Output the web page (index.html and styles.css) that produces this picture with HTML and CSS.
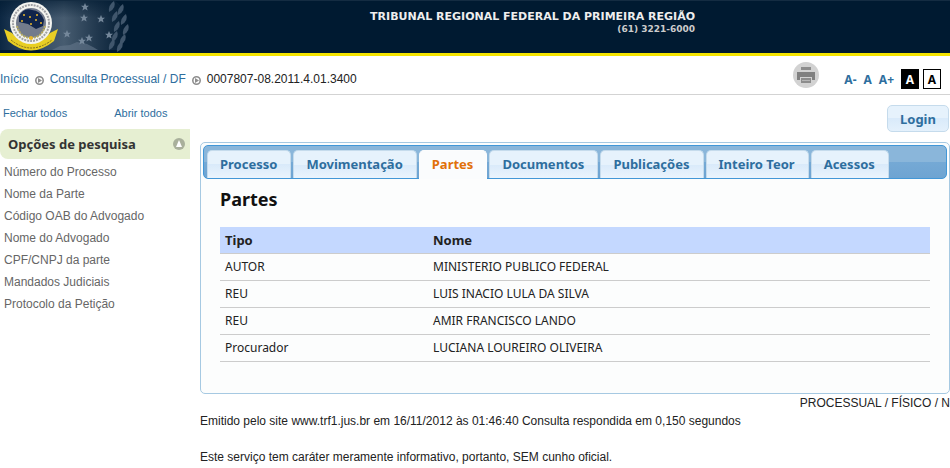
FILE: index.html
```html
<!DOCTYPE html>
<html lang="pt-BR">
<head>
    <meta charset="UTF-8">
    <meta name="viewport" content="width=device-width, initial-scale=1.0">
    <title>Consulta Processual - Partes</title>
    <link rel="stylesheet" href="styles.css">
</head>
<body>
    <header class="topo">
        <svg class="brasao" viewBox="0 1 140 52" width="140" height="52" role="img" aria-label="Tribunal Regional Federal">
            <defs>
                <linearGradient id="fundo">
                    <stop offset="0" stop-color="#0c2742"/>
                    <stop offset="0.2" stop-color="#2c4560"/>
                    <stop offset="0.5" stop-color="#475c70"/>
                    <stop offset="0.75" stop-color="#22394f"/>
                    <stop offset="1" stop-color="#001a31"/>
                </linearGradient>
                <linearGradient id="sombra" x2="0" y2="1">
                    <stop offset="0" stop-color="#001a31" stop-opacity="0.6"/>
                    <stop offset="1" stop-color="#001a31" stop-opacity="0"/>
                </linearGradient>
                <path id="estrela" d="M0-4L1.2-1.3L4-1.2L1.8.6L2.6 3.5L0 1.9L-2.6 3.5L-1.8.6L-4-1.2L-1.2-1.3Z"/>
                <path id="folha" d="M0 5Q-1-2 5-6Q8 1 0 5Z"/>
            </defs>
            <path d="M0 1H115Q130 12 128 28Q126 41 119 50H0Z" fill="url(#fundo)"/>
            <path d="M0 1H115Q122 8 126 18H0Z" fill="url(#sombra)"/>
            <path d="M52 50L60 46L70 45L77 42L87 44L93 47L98 50Z" fill="#64778a" opacity="0.6"/>
            <g fill="#40566c">
                <use href="#folha" x="109" y="7"/><use href="#folha" x="118" y="10"/>
                <use href="#folha" x="112" y="17"/><use href="#folha" x="121" y="20"/>
                <use href="#folha" x="114" y="27"/><use href="#folha" x="123" y="30"/>
                <use href="#folha" x="112" y="37"/><use href="#folha" x="120" y="40"/>
                <use href="#folha" x="109" y="45"/><use href="#folha" x="117" y="47"/>
            </g>
            <g fill="#74879a">
                <use href="#estrela" x="85" y="7"/>
                <use href="#estrela" x="84" y="18"/>
                <use href="#estrela" x="101" y="19"/>
                <use href="#estrela" x="67" y="34"/>
                <use href="#estrela" x="82" y="41"/>
                <use href="#estrela" x="89" y="38"/>
                <use href="#estrela" x="109" y="35"/>
            </g>
            <path d="M4 29L12 33Q31 54 50 33L58 29L54 41Q31 60 8 41Z" fill="#e8ce24"/>
            <path d="M11 40Q31 56 52 40" fill="none" stroke="#806d20" stroke-dasharray="2 1"/>
            <circle cx="31" cy="23" r="21" fill="#f4f4f0"/>
            <circle cx="31" cy="23" r="18" fill="none" stroke="#a0a1a5" stroke-width="2" stroke-dasharray="2 1"/>
            <circle cx="31" cy="23" r="15" fill="#737b8c"/>
            <path d="M19 16Q24 7 32 10Q40 10 44 20L43 26L36 29L28 24L19 22Z" fill="#10244b"/>
            <path d="M17 26Q20 37 30 38M45 26Q42 37 32 38" fill="none" stroke="#b5aa62" stroke-width="2" stroke-dasharray="2 1"/>
            <g fill="#e8b62a">
                <circle cx="24" cy="15" r="1"/><circle cx="30" cy="17" r="1"/><circle cx="37" cy="15" r="1"/>
                <circle cx="22" cy="21" r="1"/><circle cx="31" cy="24" r="1"/><circle cx="36" cy="20" r="1"/>
                <circle cx="41" cy="23" r="1"/><circle cx="31" cy="38" r="2"/>
            </g>
        </svg>
        <div class="tribunal">
            <strong>TRIBUNAL REGIONAL FEDERAL DA PRIMEIRA REGIÃO</strong>
            <span class="telefone">(61) 3221-6000</span>
        </div>
    </header>

    <div class="barra">
        <nav class="caminho" aria-label="Caminho">
            <a href="#">Início</a>
            <svg class="seta" viewBox="0 0 9 9" width="9" height="9"><circle cx="4.5" cy="4.5" r="3.7" fill="#fff" stroke="#8e8e8e" stroke-width="1.6"/><path d="M3 2L7 4.5L3 7Z" fill="#8e8e8e"/></svg>
            <a href="#">Consulta Processual / DF</a>
            <svg class="seta" viewBox="0 0 9 9" width="9" height="9"><circle cx="4.5" cy="4.5" r="3.7" fill="#fff" stroke="#8e8e8e" stroke-width="1.6"/><path d="M3 2L7 4.5L3 7Z" fill="#8e8e8e"/></svg>
            <span>0007807-08.2011.4.01.3400</span>
        </nav>
        <div class="ferramentas">
            <button class="imprimir" aria-label="Imprimir">
                <svg viewBox="0 0 28 28" width="28" height="28">
                    <circle cx="14" cy="14" r="13" fill="#d2d2d2"/>
                    <path d="M9 6h10v3H9z" fill="#8c8c8c"/>
                    <path d="M5 11h18v8h-3v-3H8v3H5z" fill="#808080"/>
                    <path d="M9 17h10v5H9z" fill="#8c8c8c"/>
                    <path d="M10 19.5h8" stroke="#b5b5b5"/>
                </svg>
            </button>
            <button class="fonte">A-</button>
            <button class="fonte">A</button>
            <button class="fonte">A+</button>
            <button class="contraste escuro">A</button>
            <button class="contraste">A</button>
        </div>
    </div>

    <div class="pagina">
        <aside class="lateral">
            <div class="acoes">
                <a href="#">Fechar todos</a>
                <a href="#">Abrir todos</a>
            </div>
            <h2>Opções de pesquisa
                <svg viewBox="0 0 12 12" width="12" height="12"><circle cx="6" cy="6" r="6" fill="#a9b09c"/><path d="M6 2L9 9H3Z" fill="#fff"/></svg>
            </h2>
            <ul>
                <li><a href="#">Número do Processo</a></li>
                <li><a href="#">Nome da Parte</a></li>
                <li><a href="#">Código OAB do Advogado</a></li>
                <li><a href="#">Nome do Advogado</a></li>
                <li><a href="#">CPF/CNPJ da parte</a></li>
                <li><a href="#">Mandados Judiciais</a></li>
                <li><a href="#">Protocolo da Petição</a></li>
            </ul>
        </aside>

        <main class="conteudo">
            <button class="login">Login</button>
            <div class="painel">
                <nav class="abas">
                    <a href="#">Processo</a>
                    <a href="#">Movimentação</a>
                    <a href="#" class="ativa">Partes</a>
                    <a href="#">Documentos</a>
                    <a href="#">Publicações</a>
                    <a href="#">Inteiro Teor</a>
                    <a href="#">Acessos</a>
                </nav>
                <section class="partes">
                    <h1>Partes</h1>
                    <table>
                        <thead>
                            <tr><th>Tipo</th><th>Nome</th></tr>
                        </thead>
                        <tbody>
                            <tr><td>AUTOR</td><td>MINISTERIO PUBLICO FEDERAL</td></tr>
                            <tr><td>REU</td><td>LUIS INACIO LULA DA SILVA</td></tr>
                            <tr><td>REU</td><td>AMIR FRANCISCO LANDO</td></tr>
                            <tr><td>Procurador</td><td>LUCIANA LOUREIRO OLIVEIRA</td></tr>
                        </tbody>
                    </table>
                </section>
            </div>
            <p class="sistema">PROCESSUAL / FÍSICO / N</p>
            <p>Emitido pelo site www.trf1.jus.br em 16/11/2012 às 01:46:40 Consulta respondida em 0,150 segundos</p>
            <p class="aviso">Este serviço tem caráter meramente informativo, portanto, SEM cunho oficial.</p>
        </main>
    </div>
</body>
</html>
```
FILE: styles.css
```css
* {
    box-sizing: border-box;
}
body {
    margin: 0;
    font-family: "Liberation Sans", Arial, sans-serif;
    font-size: 12px;
    line-height: 18px;
    color: #222;
    background: #fff;
}
a {
    color: #2e6e9e;
    text-decoration: none;
}
button {
    padding: 0;
    border: none;
    background: none;
    cursor: pointer;
}
.topo {
    display: flex;
    height: 56px;
    background: #001a31;
    border-top: 1px solid #142c42;
    border-bottom: 3px solid #f5e400;
}
.tribunal {
    display: flex;
    flex-direction: column;
    align-items: flex-end;
    width: 555px;
    padding-top: 9px;
    font-family: "DejaVu Sans", Verdana, sans-serif;
    font-size: 11px;
    line-height: 13px;
    color: #eee;
}
.telefone {
    font-size: 9px;
    font-weight: bold;
    line-height: 12px;
    color: #ccc;
}
.barra {
    display: flex;
    justify-content: space-between;
    height: 39px;
    padding-right: 9px;
    border-bottom: 1px solid #d3d3d3;
}
.caminho {
    display: flex;
    align-items: center;
    gap: 6px;
    padding-top: 8px;
}
.seta {
    margin-top: 3px;
}
.ferramentas {
    display: flex;
    align-items: center;
    gap: 4px;
    padding-top: 8px;
}
.imprimir {
    height: 28px;
    margin: 0 20px 8px 0;
}
.fonte,
.contraste {
    font-family: "Noto Sans", sans-serif;
    font-size: 12px;
    font-weight: bold;
    color: #2e6e9e;
}
.fonte {
    margin-right: 3px;
}
.contraste {
    width: 18px;
    height: 20px;
    border: 1px solid #000;
    color: #000;
}
.escuro {
    background: #000;
    color: #fff;
}
.pagina {
    display: flex;
    gap: 10px;
}
.lateral {
    width: 190px;
    flex-shrink: 0;
}
.acoes {
    display: flex;
    gap: 47px;
    padding: 9px 3px 7px;
    font-size: 11px;
}
.lateral h2 {
    display: flex;
    align-items: center;
    justify-content: space-between;
    height: 30px;
    margin: 0;
    padding: 0 5px 0 8px;
    border-radius: 8px 0 0 8px;
    background: #e6efd2;
    font-family: "Noto Sans", sans-serif;
    font-size: 13px;
    color: #333;
}
.lateral ul {
    margin: 2px 0 0;
    padding: 0 4px;
    list-style: none;
    line-height: 22px;
}
.lateral li a {
    color: #666;
}
.conteudo {
    display: flex;
    flex-direction: column;
    flex: 1;
    padding-top: 10px;
}
.conteudo p {
    margin: 0;
}
.login {
    align-self: flex-end;
    width: 62px;
    height: 27px;
    margin: 0 1px 10px 0;
    border: 1px solid #c5dbec;
    border-radius: 5px;
    background: linear-gradient(#e6f2fc 50%, #d9eafa 50%, #e4f1fc);
    font-family: "Noto Sans", sans-serif;
    font-size: 13px;
    font-weight: bold;
    color: #2e6e9e;
}
.painel {
    padding: 2px;
    border: 1px solid #a6c9e2;
    border-radius: 5px;
    background: #fcfdfd;
}
.abas {
    display: flex;
    gap: 2px;
    height: 34px;
    padding: 4px 3px 0;
    border: 1px solid #4297d7;
    border-radius: 5px;
    background: linear-gradient(#8ab6da 50%, #75a9d5 50%, #6ea4d2);
}
.abas a {
    padding: 4px 13px 0 12px;
    border: 1px solid #c5dbec;
    border-bottom: none;
    border-radius: 5px 5px 0 0;
    background: linear-gradient(#e6f2fc 50%, #d9eafa 50%, #eaf4fd);
    font-family: "Noto Sans", sans-serif;
    font-size: 13px;
    font-weight: bold;
}
.abas .ativa {
    margin-bottom: -1px;
    border-color: #fcfdfd;
    background: #fafcfd;
    color: #e17009;
}
.partes {
    padding: 8px 17px 29px;
    font-family: "Noto Sans", sans-serif;
}
.partes h1 {
    margin: 0 0 16px;
    font-size: 18px;
    line-height: 24px;
    color: #111;
}
table {
    width: 100%;
    border-collapse: collapse;
    table-layout: fixed;
}
th,
td {
    height: 27px;
    padding: 0 5px;
    border-bottom: 1px solid #ccc;
    text-align: left;
}
th {
    height: 26px;
    background: #c4d8ff;
    font-size: 13px;
}
th:first-child {
    width: 208px;
}
.sistema {
    text-align: right;
}
.aviso {
    padding-top: 18px;
}
```
